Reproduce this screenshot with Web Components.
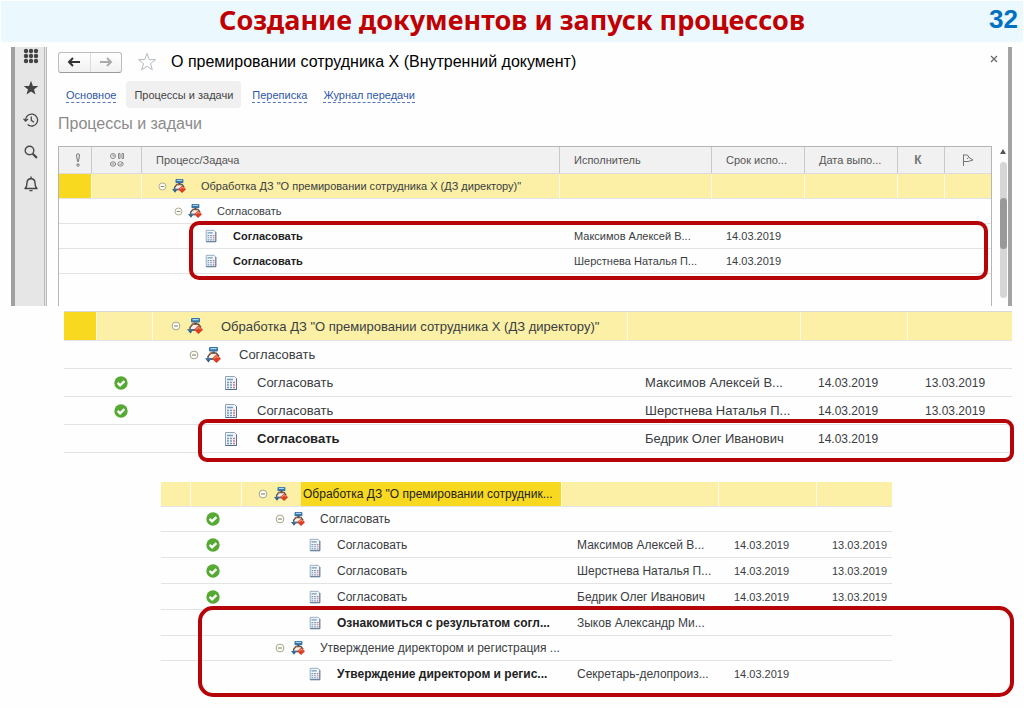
<!DOCTYPE html>
<html lang="ru">
<head>
<meta charset="utf-8">
<meta name="viewport" content="width=device-width, initial-scale=1">
<title>Создание документов и запуск процессов</title>
<style>
  body { margin: 0; background: #fefefe; font-family: "Liberation Sans", Arial, sans-serif; color: #333; }
</style>
</head>
<body>
<slide-page>
  <slide-header slot="header" number="32">Создание документов и запуск процессов</slide-header>
  <app-window>
    <app-sidebar slot="side"></app-sidebar>
    <doc-toolbar slot="top">О премировании сотрудника Х (Внутренний документ)</doc-toolbar>
    <doc-tabs slot="top"></doc-tabs>
    <span slot="heading">Процессы и задачи</span>
    <mark-area class="first"><task-grid data-set="start"></task-grid></mark-area>
  </app-window>
  <mark-area class="second"><task-grid data-set="agreed"></task-grid></mark-area>
  <mark-area class="third"><task-grid data-set="final"></task-grid></mark-area>
</slide-page>

<script>
const ICONS = {
  grid: '<svg width="16" height="16" viewBox="0 0 16 16" fill="#444"><g><circle cx="3" cy="3" r="2.2"/><circle cx="8" cy="3" r="2.2"/><circle cx="13" cy="3" r="2.2"/><circle cx="3" cy="8" r="2.2"/><circle cx="8" cy="8" r="2.2"/><circle cx="13" cy="8" r="2.2"/><circle cx="3" cy="13" r="2.2"/><circle cx="8" cy="13" r="2.2"/><circle cx="13" cy="13" r="2.2"/></g></svg>',
  star: '<svg width="16" height="16" viewBox="0 0 16 16" fill="#444"><path d="M8 .8l1.900 5.100 5.400.2-4.300 3.300 1.500 5.200L8 11.600l-4.500 3 1.500-5.200L.7 6.100l5.400-.2z"/></svg>',
  history: '<svg width="16" height="16" viewBox="0 0 16 16" fill="none" stroke="#4a4a4a" stroke-width="1.3"><path d="M2.600 8.500A6 6 0 1 1 4.600 12.600M.6 6.700l2 2.300 2.400-2M8.300 4.500v3.900l2.700 1.800"/></svg>',
  search: '<svg width="16" height="16" viewBox="0 0 16 16" fill="none" stroke="#4a4a4a" stroke-width="1.4"><circle cx="6.5" cy="6.5" r="4.3"/><path d="M9.700 9.700l4.200 4.200" stroke-width="2.2"/></svg>',
  bell: '<svg width="16" height="16" viewBox="0 0 16 16" fill="none" stroke="#444" stroke-width="1.4" stroke-linejoin="round"><path d="M2 12.500c1.500-1.300 2-2.500 2-5.500 0-2.800 1.500-4.300 4-4.300s4 1.500 4 4.300c0 3 .5 4.200 2 5.500z"/><path d="M8 .5v2M6.500 14.600h3"/></svg>',
  back: '<svg width="14" height="12" viewBox="0 0 14 12" fill="none" stroke="#333" stroke-width="2"><path d="M13 6H3M6 2L2 6l4 4"/></svg>',
  forward: '<svg width="14" height="12" viewBox="0 0 14 12" fill="none" stroke="#aaa" stroke-width="2"><path d="M1 6h10M8 2l4 4-4 4"/></svg>',
  favorite: '<svg width="20" height="20" viewBox="0 0 20 20" fill="#fff" stroke="#b4bac2" stroke-width="1"><path d="M10 1.500l2.200 6 6.300.2-5 3.900 1.800 6.200L10 14.200l-5.300 3.600 1.800-6.200-5-3.900 6.300-.2z"/></svg>',
  close: '<svg width="8" height="8" viewBox="0 0 8 8" stroke="#666" stroke-width="1.2"><path d="M1 1l6 6M7 1L1 7"/></svg>',
  important: '<svg width="6" height="14" viewBox="0 0 6 14" fill="none" stroke="#777"><path d="M1.500 2c0-1.600 3-1.600 3 0L3.500 8.500h-1z"/><circle cx="3" cy="12" r="1.2"/></svg>',
  states: '<svg width="16" height="16" viewBox="0 0 16 16" fill="none" stroke="#888"><circle cx="4" cy="4" r="2.5"/><path d="M4 2.500V4h1.500M9.500 1.500v5h1.500v-5zM13 1.500v5h1.500v-5zM2.500 12h3M10.500 12l1 1 2-2.500"/><ellipse cx="4" cy="12" rx="2.7" ry="2.2"/><ellipse cx="11.500" cy="12" rx="2.7" ry="2.2"/></svg>',
  flag: '<svg width="14" height="14" viewBox="0 0 14 14" fill="none" stroke="#777"><path d="M2.500 13V1.500M2.500 2h4l1.500 2.500 4 2.500-5 1.500H2.500M7.500 4.500L6 6"/></svg>',
  process: '<svg viewBox="0 0 16 16"><path d="M3 13V9.500L5.500 6h6L14 9v3H3z" fill="#fbf1e8"/><path d="M3 12V9.500L5.500 6.300h6L14 9.500" fill="none" stroke="#5a5652" stroke-width="1.5"/><path d="M4.500 7.500l1.800-1.500h4.500" stroke="#a9653f" stroke-width="1.3" fill="none"/><rect x="4" y="0" width="9" height="4.600" rx="1" fill="#3a74a8"/><path d="M5.500 1h6v1.300h-6z" fill="#a8d4ef"/><path d="M8.500 4.500V6" stroke="#3b5268" stroke-width="2.5"/><path d="M0 11.300h6.500L3.500 15.600z" fill="#2f5c86"/><path d="M2 12h6" stroke="#44729a" stroke-width="2"/><path d="M11.500 7.300L16 11.700 11.500 16 7 11.700z" fill="#da3f25"/><path d="M9 11.600l2.500-2.400 2 1.800" stroke="#f58a64" stroke-width="1.2" fill="none"/></svg>',
  task: '<svg viewBox="0 0 16 16"><path d="M2.500 1.500h9l2 2v11h-11z" fill="#f1f6fa" stroke="#8ea3b8"/><path d="M13.500 3.500v11h-11" fill="none" stroke="#54708e"/><path d="M4 4.500h6M4 7.500h2M7 7.500h2M4 10h2M7 10h2M4 12.500h2M7 12.500h2" stroke="#7399bd" stroke-width="1.3"/><path d="M10 7.500h2M10 10h2M10 12.500h2" stroke="#cf7b83" stroke-width="1.3"/></svg>',
  done: '<svg viewBox="0 0 14 14"><circle cx="7" cy="7" r="6.700" fill="#56a933"/><path d="M3.600 6.900l2.500 2.500 4.300-4.300" fill="none" stroke="#fff" stroke-width="2.3"/></svg>',
  minus: '<svg viewBox="0 0 10 10" fill="#fffdf0" stroke="#a5a28f"><circle cx="5" cy="5" r="3.900"/><path d="M3 5h4" stroke="#777"/></svg>'
};

const TITLE = 'Обработка ДЗ "О премировании сотрудника Х (ДЗ директору)"';
const M = 'Максимов Алексей В...', N = 'Шерстнева Наталья П...', B = 'Бедрик Олег Иванович';
const D14 = '14.03.2019', D13 = '13.03.2019';

/* Row fields: level, name, assignee, due, completed, flags */
const SETS = {
  start: {
    cols: [33, 50, 0, 152, 93, 93, 47, 46],
    head: true,
    rows: [
      [0, TITLE, '', '', '', 'selected key'],
      [1, 'Согласовать'],
      [2, 'Согласовать', M, D14, '', 'bold'],
      [2, 'Согласовать', N, D14, '', 'bold']
    ]
  },
  agreed: {
    cols: [33, 56, 0, 173, 107, 104],
    rows: [
      [0, TITLE, '', '', '', 'selected key'],
      [1, 'Согласовать'],
      [2, 'Согласовать', M, D14, D13, 'done'],
      [2, 'Согласовать', N, D14, D13, 'done'],
      [2, 'Согласовать', B, D14, '', 'bold']
    ]
  },
  final: {
    cols: [30, 51, 0, 157, 98, 75],
    rows: [
      [0, 'Обработка ДЗ "О премировании сотрудник...', '', '', '', 'selected current'],
      [1, 'Согласовать', '', '', '', 'done'],
      [2, 'Согласовать', M, D14, D13, 'done'],
      [2, 'Согласовать', N, D14, D13, 'done'],
      [2, 'Согласовать', B, D14, D13, 'done'],
      [2, 'Ознакомиться с результатом согл...', 'Зыков Александр Ми...', '', '', 'bold'],
      [1, 'Утверждение директором и регистрация ...'],
      [2, 'Утверждение директором и регис...', 'Секретарь-делопроиз...', D14, '', 'bold']
    ]
  }
};

class Base extends HTMLElement {
  connectedCallback() {
    if (!this.shadowRoot) this.attachShadow({ mode: 'open' }).innerHTML = this.view();
  }
}

customElements.define('slide-page', class extends Base {
  view() {
    return `<style>
      :host { display: block; padding: 1px 1px 12px; }
      main { display: flex; flex-direction: column; padding-top: 5px; }
      ::slotted(.second) { margin: 5px 11px 0 63px; --mark: 108px -2px -9px 134px; --mark-radius: 9px;
        --font: 13px; --date: 12px; --pad: 17px; --lead: 18px; --step: 18px; --icon: 16px; --toggle: 10px; --gap: 6px; --after: 18px; --row: 28px; --task-row: 28px; --first: 29px; --state: 17px; --line-top: #d8d8d8; }
      ::slotted(.third) { margin: 28px 131px 0 160px; --mark: 125px -122px -10px 37px; --mark-radius: 15px;
        --font: 12px; --date: 11px; --pad: 15px; --lead: 16px; --step: 17px; --icon: 14px; --toggle: 10px; --gap: 6px; --after: 15px; --row: 25px; --task-row: 26px; --first: 25px; --state: 15px; --last-line: transparent; }
    </style><slot name="header"></slot><main><slot></slot></main>`;
  }
});

customElements.define('slide-header', class extends Base {
  view() {
    return `<style>
      :host { display: grid; grid-template-columns: 34px 1fr 34px; height: 41px; background: #ebf8fe; }
      h1 { margin: 0; grid-column: 2; text-align: center; white-space: nowrap; color: #c00000; font: bold 27px/38px "Noto Sans", "Open Sans", sans-serif; }
      b { color: #0070c0; font-size: 26px; line-height: 36px; }
    </style><h1><slot></slot></h1><b>${this.getAttribute('number')}</b>`;
  }
});

customElements.define('app-window', class extends Base {
  view() {
    return `<style>
      :host { display: grid; grid-template-columns: 36px 1fr; margin: 0 11px 0 10px; border-right: 4px solid #a3a3a3; }
      section { padding: 4px 1px 0 11px; min-width: 0; }
      h2 { margin: 6px 0 12px; font: 16px/20px "Liberation Sans", Arial, sans-serif; color: #8b8b8b; }
      .body { display: grid; grid-template-columns: 1fr 8px; gap: 7px; --mark: 75px 4px 26px 131px; --mark-radius: 10px;
        --font: 11px; --date: 11px; --pad: 14px; --lead: 16px; --step: 16px; --icon: 14px; --toggle: 9px; --gap: 5px; --after: 15px; --row: 25px; --task-row: 25px; --first: 25px; --state: 16px; --edge: #b5b5b5; --line-top: #b5b5b5; --tail: 32px; }
      .scroll { display: flex; flex-direction: column; align-items: center; padding-bottom: 8px; }
      .up { border: 3px solid transparent; border-bottom: 5px solid #555; border-top: 0; margin: 3px 0 8px; }
      .track { flex: 1; width: 7px; border-radius: 4px; background: #d6d6d6; padding-top: 36px; box-sizing: border-box; }
      .thumb { height: 51px; border-radius: 4px; background: #999; }
    </style><slot name="side"></slot>
    <section><slot name="top"></slot><h2><slot name="heading"></slot></h2>
    <div class="body"><slot></slot><div class="scroll"><div class="up"></div><div class="track"><div class="thumb"></div></div></div></div></section>`;
  }
});

customElements.define('app-sidebar', class extends Base {
  view() {
    const items = [['grid', 'Меню'], ['star', 'Избранное'], ['history', 'История'], ['search', 'Поиск'], ['bell', 'Оповещения']];
    return `<style>
      :host { display: block; background: #e6e6e6; border-left: 4px solid #a0a0a0; border-right: 3px double #bbb; }
      nav { display: flex; flex-direction: column; align-items: center; gap: 14px; padding-left: 3px; }
      button { display: grid; place-items: center; width: 24px; height: 18px; padding: 0; border: 0; background: none; }
      svg { display: block; }
    </style><nav>${items.map(([k, t]) => `<button aria-label="${t}">${ICONS[k]}</button>`).join('')}</nav>`;
  }
});

customElements.define('doc-toolbar', class extends Base {
  view() {
    return `<style>
      :host { display: flex; align-items: center; height: 22px; }
      .nav { display: flex; box-sizing: border-box; width: 64px; height: 21px; border: 1px solid #bcbcbc; border-bottom-color: #999; border-radius: 3px; background: linear-gradient(#fff, #f1f1f1); }
      button { display: grid; place-items: center; flex: 1; padding: 0; border: 0; background: none; }
      .nav button + button { border-left: 1px solid #ddd; }
      .fav { flex: none; margin: 0 14px 0 15px; }
      h2 { flex: 1; margin: 0; font: 16px/22px "Liberation Sans", Arial, sans-serif; color: #000; white-space: nowrap; }
      .close { flex: none; align-self: start; width: 16px; height: 16px; margin-right: 5px; }
      svg { display: block; }
    </style><div class="nav"><button aria-label="Назад">${ICONS.back}</button><button aria-label="Вперёд">${ICONS.forward}</button></div>
    <button class="fav" aria-label="В избранное">${ICONS.favorite}</button><h2><slot></slot></h2><button class="close" aria-label="Закрыть">${ICONS.close}</button>`;
  }
});

customElements.define('doc-tabs', class extends Base {
  view() {
    return `<style>
      :host { display: flex; align-items: center; height: 27px; margin-top: 8px; padding-left: 8px; font-size: 11px; line-height: 14px; white-space: nowrap; }
      a { color: #2f57a8; text-decoration: none; border-bottom: 1px dashed #5578bd; margin: 2px 16px 0 0; }
      a:first-of-type { margin-right: 10px; }
      a.active { color: #444; background: #f0f0f0; border: 0; border-radius: 4px; padding: 7px 8px 6px; margin: 0 11px 0 0; }
    </style><a href="#main">Основное</a><a class="active" href="#tasks" aria-current="page">Процессы и задачи</a><a href="#mail">Переписка</a><a href="#log">Журнал передачи</a>`;
  }
});

/* Content with a red outline laid over part of it */
customElements.define('mark-area', class extends Base {
  view() {
    return `<style>
      :host { display: block; position: relative; min-width: 0; }
      i { position: absolute; inset: var(--mark); border: 4px solid #b60509; border-radius: var(--mark-radius); pointer-events: none; }
    </style><slot></slot><i></i>`;
  }
});

customElements.define('task-grid', class extends Base {
  row(r, count) {
    const [level, name, who = '', due = '', end = '', flags = ''] = r;
    const toggle = level < 2 ? `<button class="toggle" aria-label="Свернуть">${ICONS.minus}</button>` : '<span class="toggle"></span>';
    return `<tr class="${flags} ${level < 2 ? 'process' : 'task'}"><td></td><td class="state">${flags.includes('done') ? ICONS.done : ''}</td>
      <td class="tree"><div style="--level:${level}">${toggle}<span class="icon">${level < 2 ? ICONS.process : ICONS.task}</span><span class="name">${name}</span></div></td>
      <td>${who}</td><td class="date">${due}</td><td class="date">${end}</td>${'<td></td>'.repeat(count - 6)}</tr>`;
  }
  view() {
    const set = SETS[this.dataset.set];
    const head = set.head ? `<thead><tr><th class="pic imp">${ICONS.important}</th><th class="pic">${ICONS.states}</th><th>Процесс/Задача</th><th>Исполнитель</th><th>Срок испо...</th><th>Дата выпо...</th><th class="pic k">К</th><th class="pic">${ICONS.flag}</th></tr></thead>` : '';
    return `<style>
      :host { display: block; border: solid var(--edge, transparent); border-width: 1px ${set.head ? '1px' : '0'} 0; border-top-color: var(--line-top, transparent); padding-bottom: var(--tail, 0); }
      table { width: 100%; table-layout: fixed; border-collapse: separate; border-spacing: 0; font-size: var(--font); color: #3a3d42; }
      th, td { box-sizing: border-box; padding: 0 0 0 var(--pad); text-align: left; white-space: nowrap; }
      th { height: 27px; background: #f1f1f1; font-weight: normal; color: #555; border-right: 1px solid #c9c9c9; border-bottom: 1px solid #ddd; }
      th:last-child { border-right: 0; }
      th.pic { padding: 0; text-align: center; }
      th.imp { padding-left: 6px; }
      th.k { font-weight: bold; font-size: 12px; color: #777; padding-right: 6px; }
      th svg { vertical-align: middle; }
      td { height: var(--row); border-bottom: 1px solid #e3e3e3; }
      .task td { height: var(--task-row); }
      tbody tr:first-child td { height: var(--first); }
      tbody tr:last-child td { border-bottom-color: var(--last-line, #e3e3e3); }
      .selected td { background: #fbf0a5; border-right: 1px solid #fffbe4; }
      .selected td:last-child { border-right: 0; }
      .key td:first-child, .current .name { background: #f9d91f; }
      td.date { font-size: var(--date); }
      .state { padding-left: var(--state); }
      .state svg { display: block; width: 14px; height: 14px; }
      td.tree { padding: 0; }
      .tree div { display: flex; align-items: center; height: 100%; padding-left: calc(var(--lead) + var(--level) * var(--step)); }
      .toggle { flex: none; width: var(--toggle); height: var(--toggle); padding: 0; border: 0; background: none; margin-right: var(--gap); }
      .icon { flex: none; width: var(--icon); height: var(--icon); margin-right: var(--after); }
      .tree svg { display: block; width: 100%; height: 100%; }
      .name { flex: 1; overflow: hidden; }
      .current .name { line-height: 24px; color: #222; padding-left: 2px; margin-left: -2px; }
      .bold .name { font-weight: bold; color: #222; }
    </style><table><colgroup>${set.cols.map(w => w ? `<col style="width:${w}px">` : '<col>').join('')}</colgroup>${head}<tbody>${set.rows.map(r => this.row(r, set.cols.length)).join('')}</tbody></table>`;
  }
});
</script>
</body>
</html>
